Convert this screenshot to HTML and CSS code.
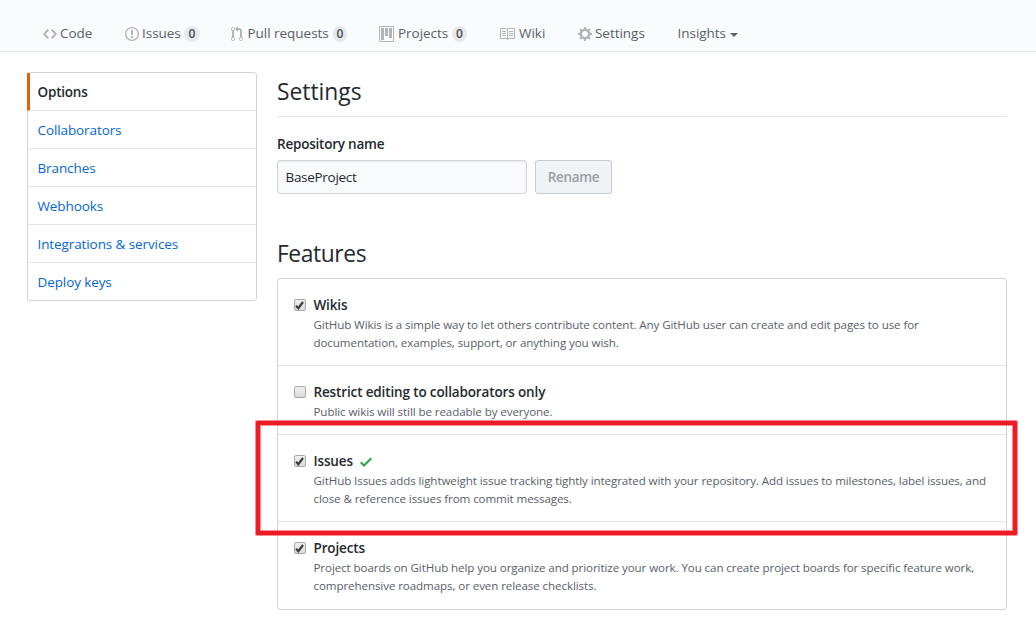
FILE: index.html
```html
<!DOCTYPE html>
<html lang="en">
<head>
<meta charset="utf-8">
<title>Settings</title>
<link rel="stylesheet" href="styles.css">
</head>
<body>
<nav class="tabs">
  <a class="tab tab-code"><svg width="14" height="16" viewBox="0 0 14 16"><path d="M9.500 3L8 4.500 11.500 8 8 11.500 9.500 13 14 8 9.500 3zm-5 0L0 8l4.500 5L6 11.500 2.500 8 6 4.500 4.500 3z"/></svg><span>Code</span></a>
  <a class="tab tab-issues"><svg width="14" height="16" viewBox="0 0 14 16"><path d="M7 2.300c3.140 0 5.700 2.560 5.700 5.700s-2.560 5.700-5.700 5.700A5.710 5.710 0 0 1 1.300 8c0-3.140 2.560-5.700 5.700-5.700zM7 1C3.140 1 0 4.140 0 8s3.140 7 7 7 7-3.140 7-7-3.140-7-7-7zm1 3H6v5h2V4zm0 6H6v2h2v-2z"/></svg><span>Issues</span><b class="count">0</b></a>
  <a class="tab tab-pulls"><svg width="12" height="16" viewBox="0 0 12 16"><path d="M11 11.280V5c-.03-.78-.34-1.470-.94-2.060C9.460 2.350 8.780 2.030 8 2H7V0L4 3l3 3V4h1c.27.02.48.11.69.31.21.2.3.42.31.69v6.280A1.993 1.993 0 0 0 10 15a1.993 1.993 0 0 0 1-3.720zm-1 2.920c-.66 0-1.200-.55-1.200-1.200 0-.65.55-1.200 1.200-1.200.65 0 1.200.55 1.200 1.200 0 .65-.55 1.200-1.200 1.200zM4 3c0-1.110-.89-2-2-2a1.993 1.993 0 0 0-1 3.720v6.560A1.993 1.993 0 0 0 2 15a1.993 1.993 0 0 0 1-3.720V4.720c.59-.34 1-.98 1-1.720zm-.8 10c0 .66-.55 1.200-1.200 1.200-.65 0-1.200-.55-1.200-1.200 0-.65.55-1.200 1.200-1.200.65 0 1.200.55 1.200 1.200zM2 4.200C1.340 4.200.8 3.650.8 3c0-.65.55-1.200 1.200-1.200.65 0 1.200.55 1.200 1.200 0 .65-.55 1.200-1.200 1.200z"/></svg><span>Pull requests</span><b class="count">0</b></a>
  <a class="tab tab-projects"><svg width="15" height="16" viewBox="0 0 15 16"><path fill-rule="evenodd" d="M10 12h3V2h-3v10zm-4-2h3V2H6v8zm-4 4h3V2H2v12zm-1 1h13V1H1v14zM14 0H1a1 1 0 0 0-1 1v14a1 1 0 0 0 1 1h13a1 1 0 0 0 1-1V1a1 1 0 0 0-1-1z"/></svg><span>Projects</span><b class="count">0</b></a>
  <a class="tab tab-wiki"><svg width="16" height="16" viewBox="0 0 16 16"><path d="M3 5h4v1H3V5zm0 3h4V7H3v1zm0 2h4V9H3v1zm11-5h-4v1h4V5zm0 2h-4v1h4V7zm0 2h-4v1h4V9zm2-6v9c0 .55-.45 1-1 1H9.500l-1 1-1-1H2c-.55 0-1-.45-1-1V3c0-.55.45-1 1-1h5.500l1 1 1-1H15c.55 0 1 .45 1 1zm-8 .5L7.500 3H2v9h6V3.500zm7-.5H9.500l-.5.5V12h6V3z"/></svg><span>Wiki</span></a>
  <a class="tab tab-settings"><svg width="14" height="16" viewBox="0 0 14 16"><path d="M14 8.770v-1.600l-1.940-.64-.45-1.090.88-1.840-1.130-1.130-1.810.91-1.090-.45-.69-1.920h-1.600l-.63 1.940-1.110.45-1.840-.88-1.130 1.130.91 1.810-.45 1.090L0 7.230v1.590l1.940.64.45 1.090-.88 1.840 1.130 1.130 1.810-.91 1.090.45.69 1.920h1.590l.63-1.940 1.110-.45 1.840.88 1.130-1.130-.92-1.810.47-1.090L14 8.750v.02zM7 11c-1.660 0-3-1.340-3-3s1.340-3 3-3 3 1.340 3 3-1.340 3-3 3z"/></svg><span>Settings</span></a>
  <a class="tab tab-insights"><span>Insights</span><i class="caret"></i></a>
</nav>
<div class="layout">
  <aside class="menu">
    <a class="menu-item selected">Options</a>
    <a class="menu-item">Collaborators</a>
    <a class="menu-item">Branches</a>
    <a class="menu-item">Webhooks</a>
    <a class="menu-item">Integrations &amp; services</a>
    <a class="menu-item">Deploy keys</a>
  </aside>
  <main class="content">
    <h2 class="title ruled">Settings</h2>
    <div class="label">Repository name</div>
    <div class="rename">
      <div class="field">BaseProject</div>
      <div class="button">Rename</div>
    </div>
    <h2 class="title section">Features</h2>
    <div class="features">
      <section class="feature">
        <span class="check"><svg width="11" height="11" viewBox="0 0 11 11"><path d="M2 5.800L4.300 8.200L9 2"/></svg></span>
        <div><h3 class="name">Wikis</h3>
        <p class="desc">GitHub Wikis is a simple way to let others contribute content. Any GitHub user can create and edit pages to use for<br>documentation, examples, support, or anything you wish.</p></div>
      </section>
      <section class="feature">
        <span class="check"></span>
        <div><h3 class="name">Restrict editing to collaborators only</h3>
        <p class="desc">Public wikis will still be readable by everyone.</p></div>
      </section>
      <section class="feature">
        <span class="check"><svg width="11" height="11" viewBox="0 0 11 11"><path d="M2 5.800L4.300 8.200L9 2"/></svg></span>
        <div><h3 class="name">Issues<svg class="saved" width="12" height="16" viewBox="0 0 12 16"><path d="M12 5l-8 8-4-4 1.500-1.500L4 10l6.500-6.500L12 5z"/></svg></h3>
        <p class="desc">GitHub Issues adds lightweight issue tracking tightly integrated with your repository. Add issues to milestones, label issues, and<br>close &amp; reference issues from commit messages.</p></div>
      </section>
      <section class="feature">
        <span class="check"><svg width="11" height="11" viewBox="0 0 11 11"><path d="M2 5.800L4.300 8.200L9 2"/></svg></span>
        <div><h3 class="name">Projects</h3>
        <p class="desc">Project boards on GitHub help you organize and prioritize your work. You can create project boards for specific feature work,<br>comprehensive roadmaps, or even release checklists.</p></div>
      </section>
      <div class="highlight"></div>
    </div>
  </main>
</div>
</body>
</html>
```
FILE: styles.css
```css
* { box-sizing: border-box; }
body { margin: 0; height: 638px; overflow: hidden; background: #fff; color: #24292e; font: 13.5px/21px "Open Sans", "Noto Sans", sans-serif; letter-spacing: -0.1px; white-space: nowrap; }
h2, h3, p { margin: 0; }
.tabs { display: flex; gap: 32px; height: 52px; padding: 16px 0 0 43px; background: #fafbfc; border-bottom: 1px solid #e1e4e8; color: #586069; }
.tab { display: flex; align-items: center; height: 35px; gap: 3px; letter-spacing: -0.03px; }
.tab svg { flex: none; fill: #b1b4b8; }
.tab-code { width: 50px; }
.tab-issues { width: 75px; margin-right: -1px; }
.tab-pulls { width: 116px; gap: 4.5px; }
.tab-projects { width: 88px; gap: 4px; }
.tab-wiki { width: 47px; gap: 4px; }
.tab-settings { width: 68px; }
.tab-insights { margin-left: -0.5px; }
.count { margin-left: auto; width: 17px; height: 16px; border-radius: 9px; background: #e8e9eb; color: #444d56; font-size: 12px; font-weight: 600; line-height: 15px; text-align: center; }
.tab-pulls .count, .tab-projects .count { margin-right: 0.5px; }
.caret { margin: 2px 0 0 1px; border: 4px solid transparent; border-top-color: #586069; border-bottom: 0; }
.layout { display: flex; gap: 20px; padding: 20px 29px 0 27px; align-items: flex-start; }
.menu { width: 230px; flex: none; border: 1px solid #d1d5da; border-radius: 3px; }
.menu-item { display: block; height: 38px; padding: 9px 9.500px 0; border-bottom: 1px solid #e1e4e8; line-height: 20px; color: #0366d6; }
.menu-item:last-child { height: 37px; border-bottom: 0; }
.selected { margin-left: -1px; padding-left: 7.500px; border-left: 3px solid #e36209; color: #24292e; font-weight: 600; letter-spacing: -0.2px; }
.content { width: 730px; }
.title { font-size: 22.8px; line-height: 36px; font-weight: 400; letter-spacing: 0; }
.section { letter-spacing: -0.4px; }
.ruled { height: 45px; border-bottom: 1px solid #e1e4e8; padding-top: 2px; }
.label { margin-top: 17px; font-weight: 600; letter-spacing: -0.22px; }
.rename { display: flex; gap: 8px; margin: 5px 0 42px; }
.field { width: 250px; height: 34px; padding: 6px 7.500px; border: 1px solid #d1d5da; border-radius: 3px; background: #fafbfc; box-shadow: inset 0 1px 2px rgba(27,31,35,.075); letter-spacing: -0.3px; }
.button { width: 77px; height: 34px; border: 1px solid #c6cbd1; border-radius: 3px; background: #eff3f6; color: #9a9fa5; font-weight: 600; line-height: 32px; text-align: center; letter-spacing: -0.3px; }
.features { position: relative; margin-top: 6px; border: 1px solid #d1d5da; border-radius: 3px; }
.feature { display: flex; gap: 7px; padding: 16px 16px 13px 15.500px; border-bottom: 1px solid #e1e4e8; }
.feature:nth-child(4) { border-bottom: 0; padding-bottom: 14px; }
.check { width: 12px; height: 12px; margin: 4px 1px 0 0; border: 1px solid #a8a8a8; border-radius: 2px; background: linear-gradient(#efefef, #dcdcdc); flex: none; display: flex; align-items: center; justify-content: center; }
.check svg { flex: none; fill: none; stroke: #3c3c3c; stroke-width: 2.2; }
.name { font-size: 13.5px; line-height: 21px; font-weight: 600; letter-spacing: -0.14px; display: flex; align-items: center; }
.saved { fill: #28a745; margin-left: 7px; }
.desc { font-size: 11.58px; line-height: 18px; letter-spacing: -0.09px; color: #586069; }
.highlight { position: absolute; left: -22px; top: 142px; width: 761px; height: 114px; border: 4px solid #ed1c24; border-radius: 1px; box-shadow: 0 0 0 1px rgba(237,28,36,.5), inset 0 0 0 1px rgba(237,28,36,.5); }
```
